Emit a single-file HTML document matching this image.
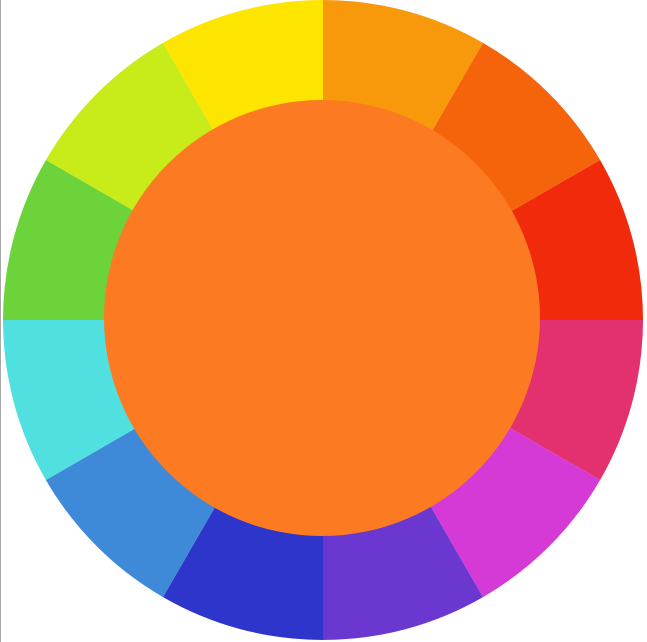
<!DOCTYPE html>
<html><head><meta charset="utf-8"><style>
html,body{margin:0;padding:0;background:#fff;width:647px;height:642px;overflow:hidden}
svg{display:block}
</style></head><body>
<svg width="647" height="642" viewBox="0 0 647 642" xmlns="http://www.w3.org/2000/svg">
<rect x="0" y="0" width="1" height="642" fill="#a8a8a8"/>
<g stroke="none">
<path d="M323 320 L323 0 A320 320 0 0 1 483 42.9 Z" fill="#F7990A"/>
<path d="M323 320 L483 42.9 A320 320 0 0 1 600.1 160 Z" fill="#F5630A"/>
<path d="M323 320 L600.1 160 A320 320 0 0 1 643 320 Z" fill="#F02A0A"/>
<path d="M323 320 L643 320 A320 320 0 0 1 600.1 480 Z" fill="#E3306E"/>
<path d="M323 320 L600.1 480 A320 320 0 0 1 483 597.1 Z" fill="#D63AD6"/>
<path d="M323 320 L483 597.1 A320 320 0 0 1 323 640 Z" fill="#6A38D0"/>
<path d="M323 320 L323 640 A320 320 0 0 1 163 597.1 Z" fill="#2E35CB"/>
<path d="M323 320 L163 597.1 A320 320 0 0 1 45.9 480 Z" fill="#3F8AD8"/>
<path d="M323 320 L45.9 480 A320 320 0 0 1 3 320 Z" fill="#50E0E0"/>
<path d="M323 320 L3 320 A320 320 0 0 1 45.9 160 Z" fill="#6CD43A"/>
<path d="M323 320 L45.9 160 A320 320 0 0 1 163 42.9 Z" fill="#C8EB1A"/>
<path d="M323 320 L163 42.9 A320 320 0 0 1 323 0 Z" fill="#FDE500"/>
</g>
<circle cx="322" cy="318" r="218" fill="#FC7A22"/>
</svg>
</body></html>
